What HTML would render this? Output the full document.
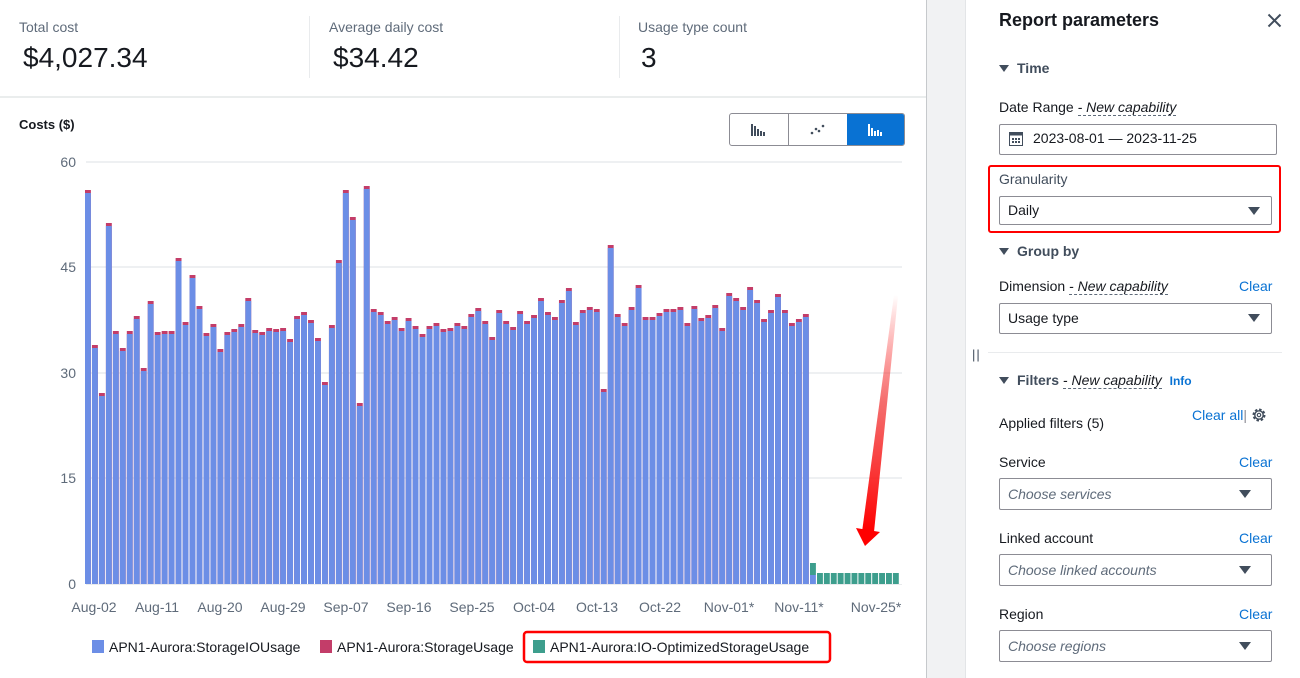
<!DOCTYPE html>
<html><head><meta charset="utf-8">
<style>
*{margin:0;padding:0;box-sizing:border-box}
body{width:1300px;height:678px;overflow:hidden;background:#fff;font-family:"Liberation Sans",sans-serif;color:#16191f;position:relative}
.a{position:absolute;white-space:nowrap}
.lbl{font-size:14px;color:#5f6b7a}
.val{font-size:28px;color:#16191f}
.rp{font-size:14px;color:#16191f}
.h{font-weight:bold;font-size:14px;color:#414d5c}
.lnk{color:#0972d3;font-size:14px}
.box{position:absolute;border:1px solid #8c8c94;border-radius:2px;background:#fff}
.ph{font-style:italic;color:#5f6b7a;font-size:14px}
.dash{border-bottom:1px dashed #5f6b7a;font-style:italic}
.tri{position:absolute;width:0;height:0;border-left:6px solid transparent;border-right:6px solid transparent;border-top:8px solid #414d5c}
.stri{display:inline-block;width:0;height:0;border-left:5px solid transparent;border-right:5px solid transparent;border-top:7px solid #414d5c;margin-right:8px;vertical-align:1px}
</style></head><body>

<div class="a lbl" style="left:19px;top:19px">Total cost</div>
<div class="a val" style="left:23px;top:42px">$4,027.34</div>
<div style="position:absolute;left:309px;top:16px;width:1px;height:62px;background:#e9ebed"></div>
<div class="a lbl" style="left:329px;top:19px">Average daily cost</div>
<div class="a val" style="left:333px;top:42px">$34.42</div>
<div style="position:absolute;left:619px;top:16px;width:1px;height:62px;background:#e9ebed"></div>
<div class="a lbl" style="left:638px;top:19px">Usage type count</div>
<div class="a val" style="left:641px;top:42px">3</div>
<div style="position:absolute;left:0;top:96px;width:926px;height:2px;background:#eaeded"></div>

<div class="a" style="left:19px;top:117px;font-size:13px;font-weight:bold">Costs ($)</div>

<div style="position:absolute;left:729px;top:113px;width:176px;height:33px;border:1px solid #8c8c94;border-radius:3px;overflow:hidden;background:#fff">
  <div style="position:absolute;left:58px;top:0;width:1px;height:33px;background:#8c8c94"></div>
  <div style="position:absolute;left:117px;top:-1px;width:59px;height:33px;background:#0972d3"></div>
  <svg style="position:absolute;left:0;top:0" width="176" height="33">
    <g fill="#414d5c"><rect x="21" y="10" width="2" height="12"/><rect x="24" y="12" width="2" height="10"/><rect x="27" y="15" width="2" height="7"/><rect x="30" y="17" width="2" height="5"/><rect x="33" y="18" width="2" height="4"/></g>
    <g fill="#414d5c"><circle cx="82" cy="19" r="1.3"/><circle cx="86" cy="15" r="1.3"/><circle cx="89" cy="17" r="1.3"/><circle cx="93" cy="12" r="1.3"/></g>
    <g fill="#fff"><rect x="138" y="10" width="2" height="12"/><rect x="141" y="14" width="2" height="8"/><rect x="144" y="17" width="2" height="5"/><rect x="147" y="16" width="2" height="6"/><rect x="150" y="18" width="2" height="4"/></g>
  </svg>
</div>

<svg style="position:absolute;left:0;top:0" width="926" height="678">
  <defs>
    <clipPath id="cb"><rect x="0" y="0" width="926" height="584"/></clipPath>
    <path id="bars" d="M85,584V190h5.9V584h1.07V345h5.9V584h1.07V393h5.9V584h1.07V223h5.9V584h1.07V331h5.9V584h1.07V348h5.9V584h1.07V331h5.9V584h1.07V316h5.9V584h1.07V368h5.9V584h1.07V301h5.9V584h1.07V332h5.9V584h1.07V331h5.9V584h1.07V331h5.9V584h1.07V258h5.9V584h1.07V322h5.9V584h1.07V275h5.9V584h1.07V306h5.9V584h1.07V333h5.9V584h1.07V324h5.9V584h1.07V349h5.9V584h1.07V332h5.9V584h1.07V329h5.9V584h1.07V324h5.9V584h1.07V298h5.9V584h1.07V330h5.9V584h1.07V332h5.9V584h1.07V328h5.9V584h1.07V329h5.9V584h1.07V328h5.9V584h1.07V339h5.9V584h1.07V316h5.9V584h1.07V312h5.9V584h1.07V320h5.9V584h1.07V338h5.9V584h1.07V382h5.9V584h1.07V325h5.9V584h1.07V260h5.9V584h1.07V190h5.9V584h1.07V217h5.9V584h1.07V403h5.9V584h1.07V186h5.9V584h1.07V309h5.9V584h1.07V312h5.9V584h1.07V321h5.9V584h1.07V317h5.9V584h1.07V328h5.9V584h1.07V318h5.9V584h1.07V326h5.9V584h1.07V334h5.9V584h1.07V326h5.9V584h1.07V323h5.9V584h1.07V329h5.9V584h1.07V328h5.9V584h1.07V323h5.9V584h1.07V326h5.9V584h1.07V314h5.9V584h1.07V308h5.9V584h1.07V321h5.9V584h1.07V337h5.9V584h1.07V310h5.9V584h1.07V321h5.9V584h1.07V327h5.9V584h1.07V311h5.9V584h1.07V321h5.9V584h1.07V315h5.9V584h1.07V298h5.9V584h1.07V312h5.9V584h1.07V317h5.9V584h1.07V300h5.9V584h1.07V288h5.9V584h1.07V322h5.9V584h1.07V310h5.9V584h1.07V307h5.9V584h1.07V309h5.9V584h1.07V389h5.9V584h1.07V245h5.9V584h1.07V314h5.9V584h1.07V323h5.9V584h1.07V307h5.9V584h1.07V285h5.9V584h1.07V317h5.9V584h1.07V317h5.9V584h1.07V313h5.9V584h1.07V309h5.9V584h1.07V309h5.9V584h1.07V307h5.9V584h1.07V323h5.9V584h1.07V306h5.9V584h1.07V318h5.9V584h1.07V315h5.9V584h1.07V305h5.9V584h1.07V328h5.9V584h1.07V293h5.9V584h1.07V298h5.9V584h1.07V307h5.9V584h1.07V287h5.9V584h1.07V300h5.9V584h1.07V319h5.9V584h1.07V310h5.9V584h1.07V294h5.9V584h1.07V310h5.9V584h1.07V323h5.9V584h1.07V319h5.9V584h1.07V314h5.9V584z"/>
    <linearGradient id="ag" x1="0" y1="0" x2="0" y2="1"><stop offset="0" stop-color="#ff0000" stop-opacity="0"/><stop offset="0.45" stop-color="#f03030" stop-opacity="0.7"/><stop offset="1" stop-color="#ff0000"/></linearGradient>
  </defs>
  <g stroke="#e9ebed" stroke-width="1.5">
    <line x1="86" y1="162" x2="902" y2="162"/><line x1="86" y1="267" x2="902" y2="267"/><line x1="86" y1="373" x2="902" y2="373"/><line x1="86" y1="478" x2="902" y2="478"/>
  </g>
  <g font-size="14" fill="#5f6b7a" text-anchor="end" font-family="Liberation Sans">
    <text x="76" y="167">60</text><text x="76" y="272">45</text><text x="76" y="378">30</text><text x="76" y="483">15</text><text x="76" y="589">0</text>
  </g>
  <use href="#bars" fill="#c33d69"/>
  <g clip-path="url(#cb)"><use href="#bars" fill="#6c8ee6" transform="translate(0,3)"/></g>
  <rect x="810" y="563" width="5.9" height="12" fill="#3d9e8d"/>
  <rect x="810" y="575" width="5.9" height="9" fill="#6c8ee6"/>
  <path fill="#3d9e8d" d="M817,584V573h5.9V584h1V573h5.9V584h1V573h5.9V584h1V573h5.9V584h1V573h5.9V584h1V573h5.9V584h1V573h5.9V584h1V573h5.9V584h1V573h5.9V584h1V573h5.9V584h1V573h5.9V584h1V573h5.9V584z"/>
  <line x1="86" y1="584.5" x2="902" y2="584.5" stroke="#e9ebed"/>
  <g font-size="14" fill="#5f6b7a" text-anchor="middle" font-family="Liberation Sans">
    <text x="94" y="612">Aug-02</text><text x="157" y="612">Aug-11</text><text x="220" y="612">Aug-20</text><text x="283" y="612">Aug-29</text><text x="346" y="612">Sep-07</text><text x="409" y="612">Sep-16</text><text x="472" y="612">Sep-25</text><text x="534" y="612">Oct-04</text><text x="597" y="612">Oct-13</text><text x="660" y="612">Oct-22</text><text x="729" y="612">Nov-01*</text><text x="799" y="612">Nov-11*</text><text x="876" y="612">Nov-25*</text>
  </g>
  <polygon points="894,295 898,296 874,532 862,532" fill="url(#ag)"/>
  <polygon points="856,528 880,532 865,546" fill="#ff0000"/>
  <rect x="92" y="640" width="12" height="13" fill="#6c8ee6"/>
  <rect x="320" y="640" width="12" height="13" fill="#c33d69"/>
  <rect x="533" y="640" width="12" height="13" fill="#3d9e8d"/>
  <g font-size="14" fill="#16191f" font-family="Liberation Sans">
    <text x="109" y="652">APN1-Aurora:StorageIOUsage</text>
    <text x="337" y="652">APN1-Aurora:StorageUsage</text>
    <text x="550" y="652">APN1-Aurora:IO-OptimizedStorageUsage</text>
  </g>
  <rect x="524" y="632" width="306" height="30" rx="3" fill="none" stroke="#f00" stroke-width="2.5"/>
</svg>

<div style="position:absolute;left:926px;top:0;width:40px;height:678px;background:#f1f2f3;border-left:1.5px solid #c6c9cc;border-right:1px solid #e3e5e7"></div>
<div class="a" style="left:972px;top:347px;font-size:13px;color:#414d5c;letter-spacing:1px">||</div>

<div class="a" style="left:999px;top:10px;font-size:18px;font-weight:bold">Report parameters</div>
<svg style="position:absolute;left:1267px;top:13px" width="15" height="15"><path d="M1.5 1.5L13.5 13.5M13.5 1.5L1.5 13.5" stroke="#414d5c" stroke-width="2"/></svg>

<div class="a h" style="left:999px;top:60px"><span class="stri"></span>Time</div>
<div class="a rp" style="left:999px;top:99px">Date Range <span class="dash">- New capability</span></div>
<div class="box" style="left:999px;top:124px;width:278px;height:31px"></div>
<svg style="position:absolute;left:1009px;top:132px" width="14" height="14"><rect x="0.5" y="0.5" width="13" height="13" fill="none" stroke="#414d5c"/><rect x="0.5" y="0.5" width="13" height="3" fill="#414d5c"/><g fill="#414d5c"><rect x="3" y="6" width="2" height="2"/><rect x="6" y="6" width="2" height="2"/><rect x="9" y="6" width="2" height="2"/><rect x="3" y="9" width="2" height="2"/><rect x="6" y="9" width="2" height="2"/><rect x="9" y="9" width="2" height="2"/></g></svg>
<div class="a rp" style="left:1033px;top:130px">2023-08-01 — 2023-11-25</div>

<div class="a rp" style="left:999px;top:171px;color:#414d5c">Granularity</div>
<div class="box" style="left:999px;top:196px;width:273px;height:29px"></div>
<div class="a rp" style="left:1008px;top:202px">Daily</div>
<div class="tri" style="left:1248px;top:207px"></div>
<div style="position:absolute;left:988px;top:165px;width:293px;height:68px;border:2.5px solid #f00;border-radius:3px"></div>

<div class="a h" style="left:999px;top:243px"><span class="stri"></span>Group by</div>
<div class="a rp" style="left:999px;top:278px">Dimension <span class="dash">- New capability</span></div>
<div class="a lnk" style="left:1239px;top:278px">Clear</div>
<div class="box" style="left:999px;top:303px;width:273px;height:31px"></div>
<div class="a rp" style="left:1008px;top:310px">Usage type</div>
<div class="tri" style="left:1248px;top:314px"></div>

<div style="position:absolute;left:988px;top:352px;width:294px;height:1px;background:#e9ebed"></div>

<div class="a h" style="left:999px;top:372px"><span class="stri"></span>Filters <span class="dash" style="font-weight:normal;color:#16191f">- New capability</span> <span style="color:#0972d3;font-size:12px;font-weight:bold;margin-left:4px">Info</span></div>
<div class="a rp" style="left:999px;top:415px">Applied filters (5)</div>
<div class="a lnk" style="left:1192px;top:407px">Clear all<span style="color:#8c8c94">|</span></div>
<svg style="position:absolute;left:1251px;top:407px" width="16" height="16"><circle cx="8" cy="8" r="5.3" fill="none" stroke="#414d5c" stroke-width="2.4" stroke-dasharray="2.4 1.75"/><circle cx="8" cy="8" r="4.2" fill="none" stroke="#414d5c" stroke-width="1.4"/><circle cx="8" cy="8" r="1.7" fill="none" stroke="#414d5c" stroke-width="1.2"/></svg>

<div class="a rp" style="left:999px;top:454px">Service</div>
<div class="a lnk" style="left:1239px;top:454px">Clear</div>
<div class="box" style="left:999px;top:478px;width:273px;height:32px"></div>
<div class="a ph" style="left:1008px;top:486px">Choose services</div>
<div class="tri" style="left:1239px;top:490px"></div>

<div class="a rp" style="left:999px;top:530px">Linked account</div>
<div class="a lnk" style="left:1239px;top:530px">Clear</div>
<div class="box" style="left:999px;top:554px;width:273px;height:32px"></div>
<div class="a ph" style="left:1008px;top:562px">Choose linked accounts</div>
<div class="tri" style="left:1239px;top:566px"></div>

<div class="a rp" style="left:999px;top:606px">Region</div>
<div class="a lnk" style="left:1239px;top:606px">Clear</div>
<div class="box" style="left:999px;top:630px;width:273px;height:32px"></div>
<div class="a ph" style="left:1008px;top:638px">Choose regions</div>
<div class="tri" style="left:1239px;top:642px"></div>

</body></html>
